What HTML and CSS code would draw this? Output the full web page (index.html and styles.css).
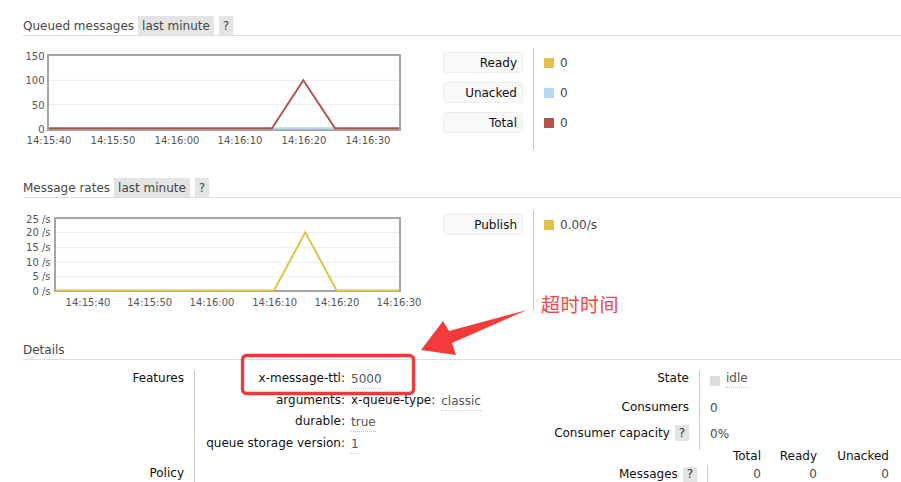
FILE: index.html
```html
<!DOCTYPE html>
<html>
<head>
<meta charset="utf-8">
<link rel="stylesheet" href="styles.css">
</head>
<body>
<div class="main">
  <div class="h2"><span class="title">Queued messages</span><span class="tag">last minute</span><span class="tag">?</span></div>
  <div class="chart-row">
    <svg class="chart" width="420" height="110" viewBox="23 40 420 110">
      <g class="grid">
        <line x1="49" y1="80.3" x2="399" y2="80.3"/>
        <line x1="49" y1="104.7" x2="399" y2="104.7"/>
      </g>
      <rect class="frame" x="48" y="55" width="352" height="75"/>
      <polyline class="s-unacked" points="272,128.3 335,128.3"/>
      <polyline class="s-total" points="49,128.3 272,128.3 303.3,80.3 335,128.3 399,128.3"/>
      <g class="ylab">
        <text x="44.5" y="59.6">150</text>
        <text x="44.5" y="84.3">100</text>
        <text x="44.5" y="108.6">50</text>
        <text x="44.5" y="132.6">0</text>
      </g>
      <g class="xlab">
        <text x="49" y="143.6">14:15:40</text>
        <text x="113" y="143.6">14:15:50</text>
        <text x="177" y="143.6">14:16:00</text>
        <text x="240" y="143.6">14:16:10</text>
        <text x="304" y="143.6">14:16:20</text>
        <text x="368" y="143.6">14:16:30</text>
      </g>
    </svg>
    <div class="legend">
      <div class="keys">
        <div class="key">Ready</div>
        <div class="key">Unacked</div>
        <div class="key">Total</div>
      </div>
      <div class="vals">
        <div class="lv"><i class="sw ready"></i>0</div>
        <div class="lv"><i class="sw unacked"></i>0</div>
        <div class="lv"><i class="sw total"></i>0</div>
      </div>
    </div>
  </div>

  <div class="h2 second"><span class="title">Message rates</span><span class="tag">last minute</span><span class="tag">?</span></div>
  <div class="chart-row">
    <svg class="chart" width="420" height="108" viewBox="23 202 420 108">
      <g class="grid">
        <line x1="56" y1="232.7" x2="399" y2="232.7"/>
        <line x1="56" y1="247.7" x2="399" y2="247.7"/>
        <line x1="56" y1="262.2" x2="399" y2="262.2"/>
        <line x1="56" y1="276.7" x2="399" y2="276.7"/>
      </g>
      <rect class="frame" x="55" y="218" width="345" height="73"/>
      <polyline class="s-ready" points="56,290.4 274,290.4 305.3,232.3 336.7,290.4 399,290.4"/>
      <g class="ylab">
        <text x="50.5" y="222.6">25 /s</text>
        <text x="50.5" y="236.3">20 /s</text>
        <text x="50.5" y="251.3">15 /s</text>
        <text x="50.5" y="265.6">10 /s</text>
        <text x="50.5" y="280.3">5 /s</text>
        <text x="50.5" y="295.3">0 /s</text>
      </g>
      <g class="xlab">
        <text x="88" y="306.3">14:15:40</text>
        <text x="149.7" y="306.3">14:15:50</text>
        <text x="212" y="306.3">14:16:00</text>
        <text x="274.7" y="306.3">14:16:10</text>
        <text x="337" y="306.3">14:16:20</text>
        <text x="399" y="306.3">14:16:30</text>
      </g>
    </svg>
    <div class="legend">
      <div class="keys">
        <div class="key">Publish</div>
      </div>
      <div class="vals">
        <div class="lv"><i class="sw ready"></i>0.00/s</div>
      </div>
    </div>
  </div>

  <div class="h2 third"><span class="title">Details</span></div>
  <div class="details">
    <div class="dleft">
      <div class="drow features">
        <div class="dth">Features</div>
        <div class="dtd">
          <div class="kv"><span class="k">x-message-ttl:</span><span class="v"><span class="u">5000</span></span></div>
          <div class="kv"><span class="k">arguments:</span><span class="v"><span class="k2">x-queue-type:</span><span class="u">classic</span></span></div>
          <div class="kv"><span class="k">durable:</span><span class="v"><span class="u">true</span></span></div>
          <div class="kv"><span class="k">queue storage version:</span><span class="v"><span class="u">1</span></span></div>
        </div>
      </div>
      <div class="drow policy">
        <div class="dth">Policy</div>
        <div class="dtd"></div>
      </div>
    </div>
    <div class="dright">
      <div class="rrow r1">
        <div class="rth">State</div>
        <div class="rtd"><i class="sw idle"></i><span class="u">idle</span></div>
      </div>
      <div class="rrow r2">
        <div class="rth">Consumers</div>
        <div class="rtd">0</div>
      </div>
      <div class="rrow r3">
        <div class="rth">Consumer capacity <span class="help">?</span></div>
        <div class="rtd">0%</div>
      </div>
      <div class="mrow mhead">
        <div class="mspacer"></div>
        <div class="mc c1">Total</div>
        <div class="mc c2">Ready</div>
        <div class="mc c3">Unacked</div>
      </div>
      <div class="mrow mvals">
        <div class="mlabel">Messages <span class="help">?</span></div>
        <div class="mc c1 num">0</div>
        <div class="mc c2 num">0</div>
        <div class="mc c3 num">0</div>
      </div>
    </div>
  </div>
</div>

<svg class="overlay" width="901" height="482" viewBox="0 0 901 482">
  <polygon class="arrow" points="527,310 449,331 443,321 421,350 456,355 452,343"/>
  <rect class="hl" x="242.5" y="355.5" width="171" height="38" rx="4" ry="4"/>
</svg>
<div class="note">超时时间</div>
</body>
</html>
```
FILE: styles.css
```css
html, body {
  margin: 0;
  padding: 0;
  background: #fff;
}
body {
  font-family: "DejaVu Sans", Verdana, sans-serif;
  font-size: 12px;
  color: #484848;
  width: 901px;
  height: 482px;
  overflow: hidden;
  position: relative;
}
.main {
  padding: 16px 0 0 23px;
}
.h2 {
  display: flex;
  align-items: stretch;
  height: 19px;
  border-bottom: 1px solid #dddddd;
  line-height: 19px;
}
.h2 span {
  box-sizing: border-box;
  height: 19px;
  padding-top: 1px;
}
.h2 .title {
  margin-right: 4px;
  color: #484848;
}
.h2 .tag {
  background: #e4e4e4;
  color: #444;
  padding-left: 4px;
  padding-right: 4px;
  margin-right: 5px;
}
.h2.second {
  margin-top: 28px;
}
.h2.third {
  margin-top: 30px;
}
.chart-row {
  display: flex;
  margin-top: 4px;
}
.chart {
  display: block;
  flex: none;
}
.grid line {
  stroke: #ececec;
  stroke-width: 1;
}
.frame {
  fill: none;
  stroke: #a6a6a6;
  stroke-width: 2;
}
.s-total, .s-unacked, .s-ready {
  fill: none;
  stroke-width: 2;
  stroke-linejoin: miter;
}
.s-total { stroke: #b5534a; }
.s-unacked { stroke: #b7d5f5; }
.s-ready { stroke: #e0c24d; }
.ylab text, .xlab text {
  font-family: "DejaVu Sans", sans-serif;
  font-size: 10px;
  fill: #555555;
}
.ylab text { text-anchor: end; }
.xlab text { text-anchor: middle; }

.legend {
  display: flex;
  margin-top: 8px;
}
.keys {
  display: flex;
  flex-direction: column;
  gap: 9px;
  padding: 4px 10px 4px 0;
  border-right: 1px solid #cccccc;
}
.key {
  box-sizing: border-box;
  width: 80px;
  height: 21px;
  line-height: 20px;
  text-align: right;
  padding-right: 5px;
  background: #f9f9f9;
  border: 1px solid #eeeeee;
  border-radius: 3px;
  color: #111;
}
.vals {
  display: flex;
  flex-direction: column;
  gap: 9px;
  padding: 4px 0 0 10px;
}
.lv {
  height: 21px;
  display: flex;
  align-items: center;
  padding-top: 1px;
  box-sizing: border-box;
}
.sw {
  display: inline-block;
  width: 10px;
  height: 10px;
  margin-right: 6px;
  flex: none;
}
.sw.ready { background: #e0c24d; }
.sw.unacked { background: #b7d5f5; }
.sw.total { background: #b5534a; }
.sw.idle { background: #dddddd; }

.details {
  display: flex;
  margin-top: 10px;
  line-height: 16px;
}
.dleft {
  width: 477px;
  flex: none;
}
.drow {
  display: flex;
}
.dth {
  width: 161px;
  padding-right: 10px;
  text-align: right;
  border-right: 1px solid #cccccc;
  color: #111;
  flex: none;
}
.features .dth, .features .dtd {
  padding-bottom: 8.5px;
}
.policy {
  min-height: 40px;
}
.kv {
  display: flex;
  height: 21.7px;
}
.k {
  width: 150px;
  text-align: right;
  color: #111;
  flex: none;
}
.v {
  margin-left: 6px;
  display: flex;
}
.k2 {
  color: #111;
  margin-right: 6px;
}
.u {
  border-bottom: 1px dotted #c4c4c4;
  line-height: 15px;
  margin-top: 2px;
  height: 16px;
  color: #555;
}
.dright {
  width: 401px;
  flex: none;
}
.rrow {
  display: flex;
}
.r1 { height: 29px; }
.r2 { height: 25px; }
.r3 { height: 26px; }
.rth {
  width: 189px;
  padding-right: 10px;
  text-align: right;
  border-right: 1px solid #cccccc;
  color: #111;
  flex: none;
}
.rtd {
  padding-left: 10px;
  display: flex;
  align-items: flex-start;
}
.r1 .sw { margin-top: 6px; }
.r1 .u { margin-top: 1px; }
.r2 .rtd { padding-top: 1px; }
.r3 .rtd { padding-top: 2px; }
.help {
  display: inline-block;
  background: #e4e4e4;
  padding: 0 4px;
  line-height: 16px;
  margin-left: 1px;
  color: #333;
}
.r3 .help {
  margin-top: 1px;
}
.mrow {
  display: flex;
}
.mhead {
  margin-top: -2px;
  height: 17px;
  color: #111;
}
.mspacer {
  width: 208px;
  flex: none;
}
.mlabel {
  width: 197px;
  padding-right: 10px;
  border-right: 1px solid #cccccc;
  text-align: right;
  color: #111;
  flex: none;
}
.mvals {
  height: 30px;
}
.mvals .mlabel .help {
  margin-top: 2px;
  line-height: 14px;
  padding-bottom: 1px;
}
.mc {
  text-align: right;
  flex: none;
}
.c1 { width: 53px; }
.c2 { width: 56px; }
.c3 { width: 72px; }
.num { color: #484848; padding-top: 1px; }

.overlay {
  position: absolute;
  left: 0;
  top: 0;
  pointer-events: none;
}
.arrow {
  fill: #f43b3b;
}
.hl {
  fill: none;
  stroke: #f2383b;
  stroke-width: 3.3;
}
.note {
  position: absolute;
  left: 541px;
  top: 292px;
  font-family: "Noto Sans CJK SC", sans-serif;
  font-size: 19px;
  line-height: 24px;
  color: #f04646;
  letter-spacing: 0.5px;
}
```
